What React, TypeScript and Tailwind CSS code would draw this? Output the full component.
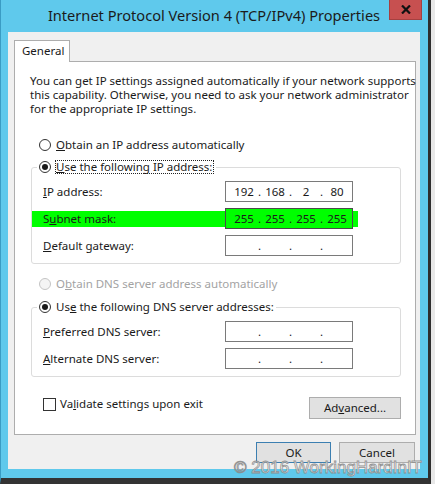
import React from "react";

const Radio = ({ checked = false, disabled = false }: { checked?: boolean; disabled?: boolean }) => (
  <span
    className={
      disabled
        ? "w-[12px] h-[12px] rounded-full border border-[#c4c4c4] bg-[#f4f4f4] flex items-center justify-center shrink-0"
        : "w-[12px] h-[12px] rounded-full border border-[#333333] bg-white flex items-center justify-center shrink-0"
    }
  >
    {checked && <span className="w-[6px] h-[6px] rounded-full bg-[#1a1a1a]" />}
  </span>
);

const IpField = ({ parts = ["", "", "", ""], green = false }: { parts?: string[]; green?: boolean }) => (
  <div
    className={
      green
        ? "w-[128px] h-[21px] border border-[#4a4a4a] bg-[#00ff00] flex items-center pl-[5px] shrink-0"
        : "w-[128px] h-[21px] border border-[#7a7a7a] bg-white flex items-center pl-[5px] shrink-0"
    }
  >
    {parts.map((p, i) => (
      <React.Fragment key={i}>
        {i > 0 && <span className="w-[5px] text-center">.</span>}
        <span className="w-[26px] text-center">{p}</span>
      </React.Fragment>
    ))}
  </div>
);

const Row = ({ label, children }: { label: React.ReactNode; children: React.ReactNode }) => (
  <div className="h-[21px] flex items-center">
    <div className="w-[193px] pl-[11px]">{label}</div>
    {children}
  </div>
);

export default function App() {
  return (
    <div className="w-[435px] h-[484px] bg-[#e8e8e8] relative overflow-hidden font-['Noto_Sans',sans-serif] text-[11.5px] leading-[14px] text-[#1a1a1a]">
      {/* window frame */}
      <div className="w-[431px] h-[484px] bg-[#5fc9ec] border-l border-l-[#3a9cc4] border-r-[3px] border-r-[#2e2e2e] border-b-[6px] border-b-[#333333] flex flex-col pl-[7px] pr-[8px] pb-[9px]">
        {/* title bar */}
        <div className="h-[32px] relative shrink-0">
          <div className="text-center text-[14.6px] leading-[30px] text-[#1b1b1b] whitespace-nowrap">
            Internet Protocol Version 4 (TCP/IPv4) Properties
          </div>
          <div className="absolute right-[-2px] top-0 w-[33px] h-[20px] bg-[#c75050] border border-t-0 border-[#a54040] flex items-center justify-center">
            <svg width="10" height="9" viewBox="0 0 10 9">
              <path d="M1 0.5 L9 8.5 M9 0.5 L1 8.5" stroke="#111" strokeWidth="2.2" />
            </svg>
          </div>
        </div>

        {/* dialog body */}
        <div className="flex-1 bg-[#f0f0f0] flex flex-col pt-[8px] pl-[6px] pr-[4px]">
          <div className="w-[56px] h-[22px] -mb-[1px] bg-white border border-b-0 border-[#adadad] relative z-10 pl-[7px] leading-[20px]">
            General
          </div>
          <div className="h-[374px] bg-white border border-[#adadad] flex flex-col pt-[12px] pl-[15px] pr-[14px]">
            <p className="whitespace-nowrap">
              You can get IP settings assigned automatically if your network supports
              <br />
              this capability. Otherwise, you need to ask your network administrator
              <br />
              for the appropriate IP settings.
            </p>

            <div className="mt-[22px] flex items-center gap-[5px] pl-[9px] h-[14px]">
              <Radio />
              <span>
                <u>O</u>btain an IP address automatically
              </span>
            </div>

            <fieldset className="mt-[8px] ml-[1px] border border-[#dcdcdc] rounded-[3px] pt-[7px] pb-[7px] flex flex-col gap-[6px]">
              <legend className="ml-[5px] px-[2px] h-[14px] flex items-center gap-[4px]">
                <Radio checked />
                <span className="border border-dotted border-[#222] leading-[12px] pr-[1px]">
                  <u>U</u>se the following IP address:
                </span>
              </legend>
              <Row label={<><u>I</u>P address:</>}>
                <IpField parts={["192", "168", "2", "80"]} />
              </Row>
              <div className="h-[21px] flex items-center">
                <div className="w-[326px] h-[16px] bg-[#00ff00] flex items-center">
                  <div className="w-[193px] pl-[11px]">
                    S<u>u</u>bnet mask:
                  </div>
                  <IpField parts={["255", "255", "255", "255"]} green />
                </div>
              </div>
              <Row label={<><u>D</u>efault gateway:</>}>
                <IpField />
              </Row>
            </fieldset>

            <div className="mt-[13px] flex items-center gap-[5px] pl-[9px] h-[14px] text-[#a3a3a3]">
              <Radio disabled />
              <span>
                O<u>b</u>tain DNS server address automatically
              </span>
            </div>

            <fieldset className="mt-[9px] ml-[1px] border border-[#dcdcdc] rounded-[3px] pt-[7px] pb-[7px] flex flex-col gap-[6px]">
              <legend className="ml-[5px] px-[2px] h-[14px] flex items-center gap-[5px]">
                <Radio checked />
                <span>
                  Us<u>e</u> the following DNS server addresses:
                </span>
              </legend>
              <Row label={<><u>P</u>referred DNS server:</>}>
                <IpField />
              </Row>
              <Row label={<><u>A</u>lternate DNS server:</>}>
                <IpField />
              </Row>
            </fieldset>

            <div className="mt-[20px] flex items-start justify-between">
              <div className="flex items-center gap-[4px] ml-[13px]">
                <span className="w-[13px] h-[13px] border border-[#333333] bg-white" />
                <span>
                  Va<u>l</u>idate settings upon exit
                </span>
              </div>
              <button className="w-[92px] h-[22px] bg-[#e1e1e1] border border-[#adadad] text-[11.5px]">
                Ad<u>v</u>anced...
              </button>
            </div>
          </div>

          <div className="mt-[7px] flex justify-end gap-[8px] pr-[1px]">
            <button className="w-[75px] h-[21px] bg-[#e1e1e1] border border-[#3c7fb1] text-[11.5px]">OK</button>
            <button className="w-[76px] h-[21px] bg-[#e1e1e1] border border-[#adadad] text-[11.5px]">Cancel</button>
          </div>
        </div>
      </div>

      {/* watermark */}
      <div className="absolute right-[13px] top-[458px] whitespace-nowrap text-[17px] leading-[20px] font-['Liberation_Sans',sans-serif] text-white [-webkit-text-stroke:0.8px_#8a8a8a] opacity-90">
        © 2016 WorkingHardInIT
      </div>
    </div>
  );
}
